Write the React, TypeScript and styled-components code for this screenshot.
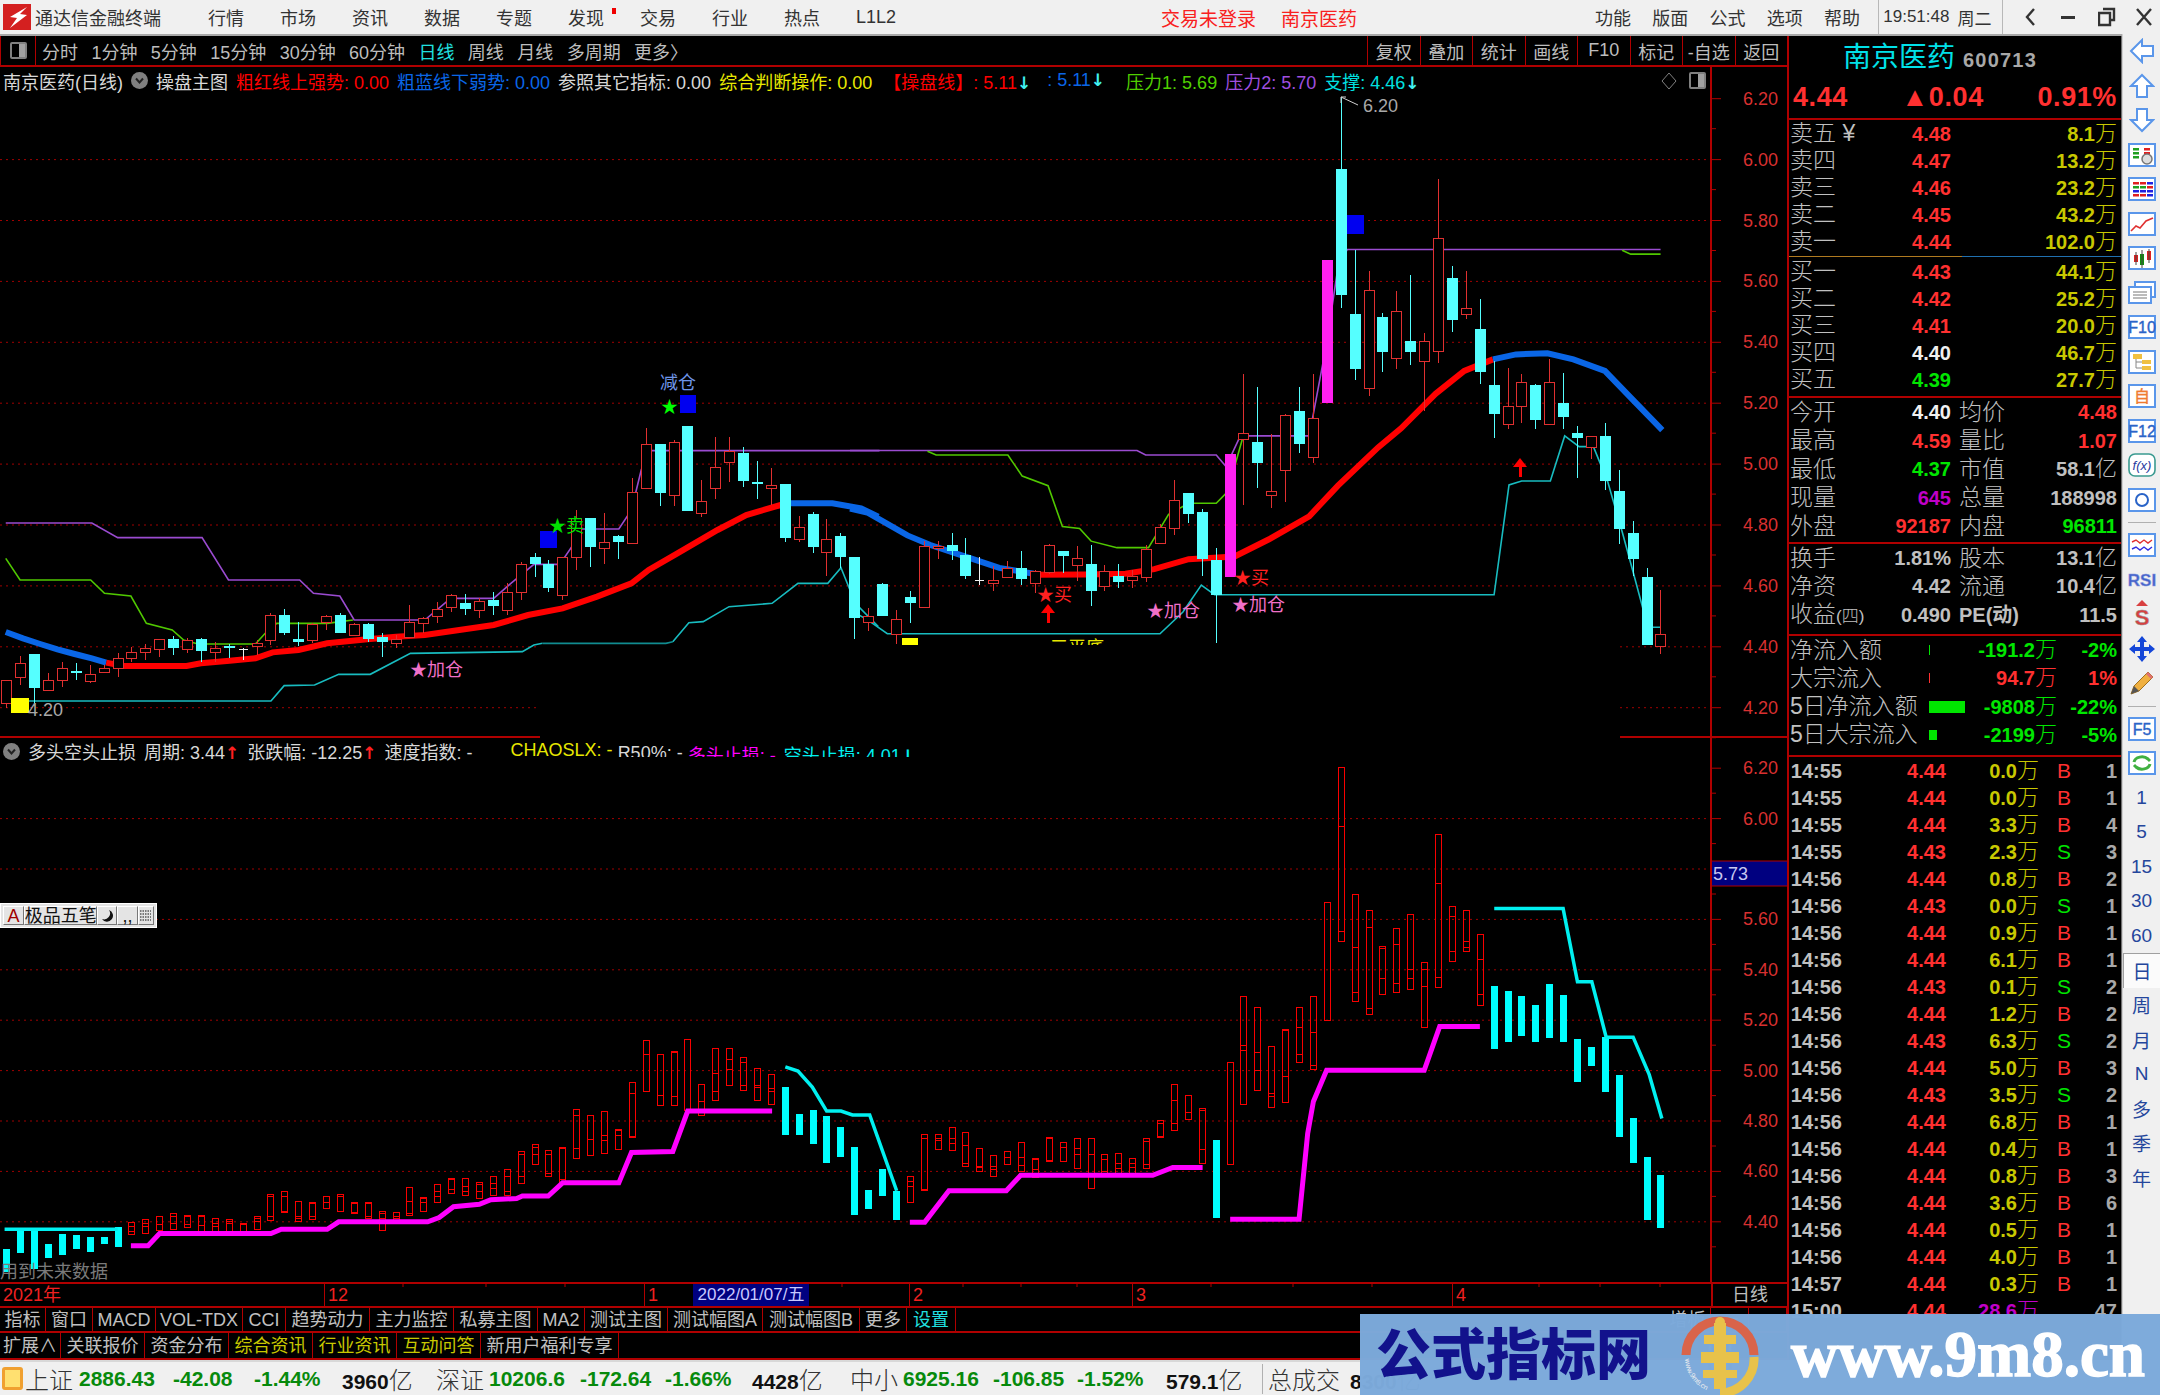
import React from "react";
import styled, { createGlobalStyle } from "styled-components";

const FONT = `"Liberation Sans", "Noto Sans CJK SC", "DejaVu Sans", sans-serif`;
const RED = "#ff3030";
const GREEN = "#00e600";
const GOLD = "#c8c800";
const GRAY = "#c0c0c0";
const LINE = "#b00000";

const GlobalStyle = createGlobalStyle`
  html, body { margin: 0; padding: 0; background: #000; overflow: hidden; }
  * { box-sizing: border-box; }
`;

/* ---------- chart data: rows are read off the plot, [high, bodyTop, bodyBottom, low, kind] ---------- */
type Row = [number, number, number, number, string];
const earlyRows: Row[] = [
  [1020, 1020, 1090, 1103, "r"], [947, 970, 1012, 1035, "r"], [943, 943, 1045, 1090, "c"], [1000, 1020, 1050, 1050, "r"],
  [965, 985, 1020, 1040, "r"], [970, 992, 1000, 1020, "c"], [975, 1003, 1022, 1030, "r"], [975, 985, 997, 1000, "r"],
  [940, 953, 985, 1010, "r"], [922, 935, 955, 965, "r"], [912, 925, 936, 960, "r"], [898, 898, 928, 950, "r"],
  [888, 898, 925, 945, "c"], [895, 900, 927, 940, "r"], [895, 898, 933, 965, "c"], [905, 925, 937, 965, "r"],
  [912, 918, 924, 955, "c"], [925, 927, 928, 960, "w"], [900, 908, 918, 945, "r"], [820, 826, 900, 915, "r"],
  [808, 826, 880, 885, "c"], [845, 898, 905, 918, "c"], [848, 853, 900, 910, "r"], [826, 828, 847, 870, "r"],
  [818, 826, 880, 880, "c"], [850, 853, 885, 888, "r"], [850, 853, 898, 905, "c"], [880, 890, 905, 950, "c"],
  [885, 898, 908, 925, "r"], [795, 845, 890, 895, "r"], [830, 835, 848, 880, "r"], [785, 808, 828, 850, "r"],
  [762, 765, 802, 815, "r"], [762, 790, 808, 825, "c"], [775, 783, 810, 835, "r"], [755, 780, 798, 825, "c"],
  [730, 755, 810, 825, "r"], [665, 673, 755, 780, "r"], [640, 650, 673, 710, "c"], [660, 673, 745, 755, "c"],
  [650, 652, 765, 780, "r"], [510, 535, 652, 690, "r"], [533, 535, 622, 680, "c"], [520, 607, 625, 672, "r"],
  [585, 587, 605, 658, "c"], [415, 455, 608, 612, "r"], [263, 313, 445, 447, "r"], [313, 313, 460, 497, "c"],
  [300, 305, 465, 497, "r"], [258, 258, 514, 514, "c"], [420, 482, 518, 532, "r"], [290, 382, 445, 478, "r"],
  [290, 332, 365, 425, "r"], [322, 340, 424, 442, "c"], [362, 425, 433, 478, "c"], [385, 435, 445, 495, "r"],
  [433, 433, 595, 605, "c"], [528, 562, 598, 605, "r"], [515, 523, 622, 640, "c"], [538, 597, 635, 708, "r"],
  [578, 587, 650, 685, "c"], [650, 650, 833, 897, "c"],
];
const lateRows: Row[] = [
  [1380, 1400, 1417, 1440, "r"], [1315, 1317, 1400, 1401, "c"], [1385, 1408, 1447, 1475, "r"], [1335, 1352, 1367, 1420, "c"],
  [1205, 1217, 1378, 1380, "r"], [1205, 1217, 1224, 1252, "r"], [1183, 1216, 1232, 1255, "c"], [1198, 1240, 1296, 1305, "c"],
  [1247, 1306, 1307, 1320, "w"], [1270, 1306, 1315, 1335, "r"], [1258, 1276, 1298, 1300, "r"], [1230, 1275, 1303, 1320, "c"],
  [1280, 1284, 1315, 1340, "r"], [1212, 1216, 1285, 1290, "r"], [1230, 1230, 1245, 1288, "c"], [1218, 1248, 1267, 1310, "r"],
  [1215, 1266, 1335, 1375, "c"], [1268, 1283, 1322, 1335, "r"], [1265, 1297, 1312, 1328, "c"], [1280, 1297, 1307, 1328, "r"],
  [1215, 1225, 1298, 1312, "r"], [1160, 1168, 1210, 1212, "r"], [1045, 1098, 1170, 1190, "r"], [1080, 1080, 1135, 1158, "c"],
  [1122, 1128, 1252, 1295, "c"], [1222, 1253, 1345, 1470, "c"], [977, 977, 1300, 1300, "m"], [768, 922, 938, 1110, "r"],
  [803, 945, 1002, 1065, "c"], [925, 1075, 1085, 1118, "r"], [872, 875, 1020, 1103, "r"], [803, 866, 950, 975, "c"],
  [768, 883, 985, 1000, "r"], [470, 470, 845, 845, "m"], [45, 232, 562, 595, "c"], [445, 612, 755, 785, "c"],
  [498, 550, 805, 825, "r"], [610, 618, 712, 762, "c"], [552, 604, 727, 755, "r"], [510, 682, 712, 745, "c"],
  [662, 683, 735, 865, "r"], [258, 412, 707, 740, "r"], [485, 517, 626, 658, "c"], [498, 596, 612, 625, "r"],
  [572, 650, 763, 795, "c"], [735, 796, 873, 935, "c"], [752, 851, 898, 912, "r"], [768, 790, 852, 895, "r"],
  [795, 796, 888, 912, "c"], [730, 790, 900, 902, "r"], [765, 843, 880, 912, "c"], [905, 922, 936, 1040, "c"],
  [930, 930, 960, 990, "r"], [897, 930, 1048, 1072, "c"], [1018, 1074, 1173, 1213, "c"], [1152, 1184, 1252, 1295, "c"],
  [1275, 1298, 1477, 1477, "c"], [1333, 1448, 1478, 1500, "r"],
];

const earlyPrice = (v: number) => 5.4076 - v / 913.5;
const latePrice = (v: number) => 6.2614 - v / 795.7;
const candles = [
  ...earlyRows.map((r) => ({ h: earlyPrice(r[0]), t: earlyPrice(r[1]), b: earlyPrice(r[2]), l: earlyPrice(r[3]), kind: r[4] })),
  ...lateRows.map((r) => ({ h: latePrice(r[0]), t: latePrice(r[1]), b: latePrice(r[2]), l: latePrice(r[3]), kind: r[4] })),
];
const candleX = (i: number) => Math.round(6.3 + 13.9 * i);
const upperY = (p: number) => 159.6 + (6 - p) * 304.5;
const lowerY = (p: number) => 818.6 + (6 - p) * 252;
const isStopRun = (i: number) => i <= 8 || (i >= 56 && i <= 64) || i === 87 || i >= 107;

type Pt = [number, number];
const leftUpper = (pts: Pt[]) => pts.map(([x, y]) => `${x / 1.742},${340 + y / 3}`).join(" ");
const rightUpper = (pts: Pt[]) => pts.map(([x, y]) => `${850 + x / 1.742},${80 + y / 2.613}`).join(" ");
const leftLower = (pts: Pt[]) => pts.map(([x, y]) => `${x / 1.742},${730 + y / 2.8}`).join(" ");
const rightLower = (pts: Pt[]) => pts.map(([x, y]) => `${880 + x / 1.742},${730 + y / 2.8}`).join(" ");

const TICK_PRICES = [6.2, 6.0, 5.8, 5.6, 5.4, 5.2, 5.0, 4.8, 4.6, 4.4];

const Plot = styled.svg`
  display: block;
  overflow: visible;
  font-family: ${FONT};
`;

const Mark = ({ x, y, star, label, color, size = 18 }: { x: number; y: number; star?: boolean; label: string; color: string; size?: number }) => (
  <text x={x} y={y} fill={color} fontSize={size}>
    {star ? <tspan fontSize={17}>★</tspan> : null}
    {label}
  </text>
);

const UpArrow = ({ x, y }: { x: number; y: number }) => (
  <g fill="#ff0000">
    <polygon points={`${x - 7},${y + 9} ${x},${y} ${x + 7},${y + 9}`} />
    <rect x={x - 1} y={y + 8} width={3} height={11} />
  </g>
);

const UpperChart = () => (
  <Plot width={1787} height={643} viewBox="0 94 1787 643">
    {[6.0, 5.8, 5.6, 5.4, 5.2, 5.0, 4.8, 4.6, 4.4, 4.2].map((p) => (
      <line key={p} x1={0} x2={1710} y1={upperY(p)} y2={upperY(p)} stroke="#a00000" strokeDasharray="2 4" />
    ))}
    {/* thin pressure and support steps */}
    <g fill="none" strokeWidth={1.6}>
      <polyline stroke="#9a4bd0" points={leftUpper([[10, 549], [160, 549], [205, 593], [352, 593], [398, 720], [522, 720], [546, 760], [592, 768], [617, 840], [740, 840], [785, 775], [860, 775], [890, 730], [930, 673], [975, 673], [1000, 610], [1010, 567], [1078, 567], [1100, 510], [1117, 390], [1130, 332], [1532, 332]])} />
      <polyline stroke="#9a4bd0" points={rightUpper([[0, 968], [500, 968], [515, 980], [638, 980], [655, 1010], [680, 930], [800, 930], [830, 690], [850, 490], [866, 443], [1412, 443]])} />
      <polyline stroke="#50c800" points={leftUpper([[10, 655], [35, 720], [158, 720], [182, 760], [228, 768], [255, 850], [300, 870], [320, 900], [345, 912], [445, 912], [462, 880], [482, 850], [570, 850], [615, 840]])} />
      <polyline stroke="#50c800" points={rightUpper([[135, 970], [150, 980], [275, 980], [300, 1035], [345, 1060], [370, 1167], [400, 1172], [420, 1205], [465, 1222], [520, 1222], [555, 1135], [590, 1106], [638, 1106], [655, 1080], [670, 1010], [685, 930]])} />
      <polyline stroke="#50c800" points={rightUpper([[1345, 445], [1360, 455], [1412, 455]])} />
      <polyline stroke="#18bcc0" points={leftUpper([[50, 1083], [472, 1083], [495, 1037], [548, 1035], [590, 1003], [645, 1003], [715, 940], [910, 935], [930, 915], [945, 910]])} />
      <polyline stroke="#108c90" points={leftUpper([[945, 910], [1160, 910], [1172, 905]])} />
      <polyline stroke="#18bcc0" points={leftUpper([[1172, 905], [1200, 848], [1225, 845], [1270, 800], [1345, 790], [1390, 730], [1442, 730], [1465, 683], [1490, 790], [1530, 860]])} />
      <polyline stroke="#18bcc0" points={rightUpper([[0, 1385], [30, 1410], [65, 1447], [540, 1447], [580, 1390], [612, 1320], [635, 1345], [1122, 1345], [1148, 1058], [1170, 1048], [1220, 1048], [1245, 930], [1270, 958], [1295, 958], [1320, 1050], [1345, 1180], [1365, 1290], [1390, 1430], [1412, 1430]])} />
    </g>
    {/* thick trend line */}
    <g fill="none" strokeWidth={6}>
      <polyline stroke="#0a66e6" points={leftUpper([[10, 876], [40, 895], [70, 912], [100, 928], [130, 942], [160, 955], [185, 968]])} />
      <polyline stroke="#ff0000" points={leftUpper([[185, 968], [215, 978], [325, 978], [350, 970], [400, 962], [445, 955], [475, 937], [520, 930], [570, 910], [640, 898], [690, 890], [740, 885], [800, 870], [860, 855], [920, 825], [980, 805], [1040, 770], [1100, 730], [1130, 690], [1180, 640], [1250, 570], [1300, 525], [1360, 495]])} />
      <polyline stroke="#0a66e6" points={leftUpper([[1360, 490], [1450, 490], [1500, 505], [1530, 530]])} />
      <polyline stroke="#0a66e6" points={rightUpper([[0, 1120], [30, 1130], [100, 1190], [140, 1215], [200, 1245], [260, 1275], [320, 1290]])} />
      <polyline stroke="#ff0000" points={rightUpper([[320, 1293], [410, 1292], [480, 1290], [530, 1278], [590, 1252], [670, 1245], [730, 1200], [800, 1140], [850, 1060], [920, 960], [960, 910], [1020, 820], [1070, 760], [1120, 730]])} />
      <polyline stroke="#0a66e6" points={rightUpper([[1120, 730], [1160, 717], [1215, 714], [1260, 730], [1315, 760], [1360, 830], [1415, 915]])} />
    </g>
    {/* candles */}
    <g shapeRendering="crispEdges">
      {candles.map((c, i) => {
        const x = candleX(i);
        const colour = c.kind === "c" ? "#55ffff" : c.kind === "w" ? "#f0f0f0" : c.kind === "m" ? "#ff20f0" : "#e03030";
        const top = Math.round(upperY(c.t));
        const bottom = Math.round(upperY(c.b));
        return (
          <g key={i}>
            <line x1={x + 0.5} x2={x + 0.5} y1={upperY(c.h)} y2={upperY(c.l)} stroke={colour} />
            {c.kind === "r" ? (
              <rect x={x - 4.5} y={top + 0.5} width={10} height={bottom - top} fill="#000" stroke={colour} />
            ) : c.kind === "w" ? (
              <line x1={x - 4} x2={x + 5} y1={top + 0.5} y2={top + 0.5} stroke={colour} />
            ) : (
              <rect x={x - 5} y={top} width={11} height={bottom - top} fill={colour} />
            )}
          </g>
        );
      })}
    </g>
    {/* cut by the hidden strip below */}
    <text x={1050} y={654} fill="#e8e800" fontSize={18}>三平底</text>
    <rect x={902} y={638} width={16} height={8} fill="#ffff00" />
    <rect x={540} y={645} width={1080} height={92} fill="#000" />
    {/* signals */}
    <rect x={680} y={395} width={16} height={18} fill="#0000f0" />
    <rect x={540} y={531} width={17} height={17} fill="#0000f0" />
    <rect x={1347} y={215} width={17} height={19} fill="#0000f0" />
    <rect x={11} y={698} width={18} height={15} fill="#ffff00" />
    <Mark x={660} y={389} label="减仓" color="#6f95e8" />
    <Mark x={661} y={413} star label="" color="#00ff00" />
    <Mark x={549} y={532} star label="卖" color="#00e000" />
    <Mark x={410} y={676} star label="加仓" color="#f070c8" />
    <Mark x={1147} y={617} star label="加仓" color="#f070c8" />
    <Mark x={1232} y={611} star label="加仓" color="#f070c8" />
    <Mark x={1234} y={584} star label="买" color="#ff2020" />
    <Mark x={1037} y={601} star label="买" color="#ff2020" />
    <UpArrow x={1048} y={604} />
    <UpArrow x={1520} y={458} />
    <text x={28} y={716} fill="#a8a8a8" fontSize={18}>4.20</text>
    <polyline points="1341,97 1358,105" stroke="#d0d0d0" fill="none" />
    <polyline points="1341,103 1341,97 1346,97" stroke="#d0d0d0" fill="none" />
    <text x={1363} y={112} fill="#a8a8a8" fontSize={18}>6.20</text>
    {/* axis */}
    <line x1={0} x2={540} y1={737} y2={737} stroke={LINE} strokeWidth={2} />
    <line x1={1620} x2={1787} y1={737} y2={737} stroke={LINE} strokeWidth={2} />
    <line x1={1711} x2={1711} y1={66} y2={737} stroke={LINE} strokeWidth={2} />
    {[...TICK_PRICES, 4.2].map((p) => (
      <g key={p}>
        <line x1={1711} x2={1721} y1={upperY(p)} y2={upperY(p)} stroke={LINE} />
        <line x1={1711} x2={1716} y1={upperY(p) + 30} y2={upperY(p) + 30} stroke={LINE} />
        <text x={1743} y={upperY(p) + 6} fill="#d83030" fontSize={18}>{p.toFixed(2)}</text>
      </g>
    ))}
  </Plot>
);

const LowerChart = () => (
  <Plot width={1787} height={517} viewBox="0 765 1787 517">
    {[6.0, 5.8, 5.6, 5.4, 5.2, 5.0, 4.8, 4.6, 4.4].map((p) => (
      <line key={p} x1={0} x2={1710} y1={lowerY(p)} y2={lowerY(p)} stroke="#a00000" strokeDasharray="2 4" />
    ))}
    <g shapeRendering="crispEdges">
      {candles.map((c, i) => {
        const x = candleX(i);
        const top = Math.round(lowerY(c.h));
        const bottom = Math.min(Math.round(lowerY(c.l)), 1281);
        if (isStopRun(i)) {
          return <rect key={i} x={x - 3} y={top} width={7} height={bottom - top} fill="#00ffff" />;
        }
        return (
          <g key={i} stroke="#f80000" fill="none">
            <rect x={x - 2.5} y={top + 0.5} width={6} height={bottom - top} />
            <line x1={x - 2} x2={x + 3} y1={Math.round(lowerY(c.t)) + 0.5} y2={Math.round(lowerY(c.t)) + 0.5} />
            <line x1={x - 2} x2={x + 3} y1={Math.round(lowerY(c.b)) + 0.5} y2={Math.round(lowerY(c.b)) + 0.5} />
          </g>
        );
      })}
    </g>
    <g fill="none" stroke="#ff00ff" strokeWidth={5}>
      <polyline points={leftLower([[228, 1444], [258, 1444], [278, 1410], [472, 1410], [490, 1398], [570, 1398], [590, 1377], [745, 1377], [765, 1365], [790, 1335], [835, 1328], [855, 1315], [900, 1312], [910, 1305], [955, 1305], [980, 1268], [1078, 1268], [1100, 1183], [1172, 1180], [1198, 1067], [1345, 1067]])} />
      <polyline points={rightLower([[52, 1378], [78, 1378], [120, 1290], [220, 1290], [245, 1247], [475, 1247], [510, 1225], [562, 1225]])} />
      <polyline points={rightLower([[610, 1370], [730, 1370], [745, 1130], [755, 1040], [778, 953], [948, 953], [975, 830], [1045, 830]])} />
    </g>
    <g fill="none" stroke="#00f0f0" strokeWidth={3.5}>
      <polyline points={leftLower([[8, 1398], [205, 1398]])} />
      <polyline points={leftLower([[1368, 943], [1390, 955], [1415, 1000], [1440, 1067], [1465, 1067], [1485, 1078], [1515, 1078], [1562, 1290]])} />
      <polyline points={rightLower([[1070, 500], [1190, 500], [1215, 705], [1240, 705], [1265, 860], [1312, 860], [1340, 965], [1362, 1088]])} />
    </g>
    <text x={0} y={1278} fill="#7a7a7a" fontSize={18}>用到未来数据</text>
    <line x1={1711} x2={1711} y1={737} y2={1282} stroke={LINE} strokeWidth={2} />
    {TICK_PRICES.map((p) => (
      <g key={p}>
        <line x1={1711} x2={1721} y1={lowerY(p)} y2={lowerY(p)} stroke={LINE} />
        <line x1={1711} x2={1716} y1={lowerY(p) + 25} y2={lowerY(p) + 25} stroke={LINE} />
        <text x={1743} y={lowerY(p) + 6} fill="#d83030" fontSize={18}>{p.toFixed(2)}</text>
      </g>
    ))}
    <rect x={1712} y={861} width={75} height={25} fill="#000080" />
    <line x1={1712} x2={1787} y1={861} y2={861} stroke={LINE} />
    <line x1={1712} x2={1787} y1={886} y2={886} stroke={LINE} />
    <text x={1713} y={880} fill="#c8c8f0" fontSize={18}>5.73</text>
    {[403, 486, 565, 842, 963, 1021, 1077, 1211, 1293, 1372, 1539, 1600, 1660].map((x) => (
      <line key={x} x1={x} x2={x} y1={1282} y2={1287} stroke={LINE} />
    ))}
  </Plot>
);

/* ---------- window frame ---------- */
const Window = styled.div`
  position: relative;
  width: 2160px;
  height: 1395px;
  overflow: hidden;
  background: #000;
  font-family: ${FONT};
`;

const TitleBar = styled.div`
  display: flex;
  align-items: center;
  height: 36px;
  background: #f0f0f0;
  border-bottom: 2px solid #a8a8a8;
  color: #333;
  font-size: 18px;
`;

const AppName = styled.span`
  flex: none;
  width: 126px;
  margin: 0 47px 0 2px;
  white-space: nowrap;
`;

const MenuItem = styled.span<{ $width?: number }>`
  flex: none;
  width: ${(p) => p.$width ?? 72}px;
  position: relative;
  white-space: nowrap;
`;

const NewDot = styled.i`
  position: absolute;
  left: 44px;
  top: 4px;
  width: 4px;
  height: 6px;
  background: #f00000;
`;

const AlertText = styled.span<{ $width: number }>`
  flex: none;
  width: ${(p) => p.$width}px;
  color: #f82020;
  font-size: 19px;
  white-space: nowrap;
`;

const ClockBox = styled.div`
  flex: none;
  display: flex;
  align-items: center;
  gap: 8px;
  width: 125px;
  height: 34px;
  margin-left: -3px;
  padding-left: 4px;
  border-left: 1px solid #b8b8b8;
  border-right: 1px solid #b8b8b8;
  white-space: nowrap;
  font-size: 17px;
`;

const WinButton = styled.svg<{ $gap: number }>`
  display: block;
  margin-left: ${(p) => p.$gap}px;
  flex: none;
`;

const Body = styled.div`
  display: flex;
  height: 1324px;
`;

const LeftColumn = styled.div`
  display: flex;
  flex-direction: column;
  width: 1787px;
`;

const ToolRow = styled.div`
  display: flex;
  align-items: center;
  height: 31px;
  border-bottom: 2px solid ${LINE};
  color: #bdbdbd;
  font-size: 18px;
`;

const ToolSquare = styled.div`
  display: flex;
  align-items: center;
  justify-content: center;
  width: 36px;
  height: 29px;
  margin-right: 6px;
  border-right: 1px solid ${LINE};
  border-left: 1px solid ${LINE};
`;

const MiniWindow = styled.i`
  display: block;
  width: 17px;
  height: 17px;
  border: 2px solid #808080;
  border-radius: 2px;
  background: linear-gradient(90deg, #000 55%, #a0a0a0 55%);
`;

const PeriodTab = styled.span<{ $active?: boolean }>`
  margin-right: 13.4px;
  color: ${(p) => (p.$active ? "#20e0e0" : "#bdbdbd")};
  white-space: nowrap;
`;

const ToolButtons = styled.div`
  display: flex;
  margin-left: auto;
  height: 29px;
`;

const ToolButton = styled.span`
  display: flex;
  align-items: center;
  justify-content: center;
  width: 52.5px;
  border-left: 1px solid ${LINE};
  white-space: nowrap;
`;

const Legend = styled.div<{ $height: number }>`
  display: flex;
  align-items: center;
  gap: 8px;
  width: 1711px;
  height: ${(p) => p.$height}px;
  padding-left: 3px;
  overflow: hidden;
  font-size: 18px;
  color: #d8d8d8;
  white-space: nowrap;
`;

const LegendItem = styled.span<{ $color?: string; $drop?: number; $gap?: number }>`
  color: ${(p) => p.$color ?? "#d8d8d8"};
  padding-top: ${(p) => p.$drop ?? 0}px;
  margin-left: ${(p) => p.$gap ?? 0}px;
`;

/* the outputs past 速度指数 are cut by the pane below them */
const CutStrip = styled.div`
  display: flex;
  align-items: flex-start;
  align-self: flex-start;
  gap: 8px;
  height: 20px;
  overflow: hidden;
  line-height: 20px;
`;

const ArrowMark = styled.span<{ $color: string }>`
  color: ${(p) => p.$color};
  font-family: "DejaVu Sans", sans-serif;
  font-size: 17px;
  font-weight: 700;
`;

const Badge = styled.i`
  flex: none;
  display: flex;
  align-items: center;
  justify-content: center;
  width: 17px;
  height: 17px;
  border-radius: 50%;
  background: #808080;
`;

const LegendTools = styled.div`
  display: flex;
  align-items: center;
  gap: 11px;
  margin-left: auto;
  padding-right: 5px;
`;

const LowerPane = styled.div`
  position: relative;
`;

const InputBar = styled.div`
  position: absolute;
  left: 0;
  top: 166px;
  display: flex;
  align-items: stretch;
  height: 25px;
  width: 157px;
  padding: 2px;
  background: #e4e4e4;
  border: 1px solid #fff;
  color: #111;
  font-size: 18px;
  line-height: 20px;
  z-index: 2;
`;

const InputCell = styled.span<{ $width: number; $color?: string }>`
  display: flex;
  align-items: center;
  justify-content: center;
  width: ${(p) => p.$width}px;
  border: 1px solid #777;
  border-top-color: #fff;
  border-left-color: #fff;
  color: ${(p) => p.$color ?? "#111"};
  white-space: nowrap;
`;

const TimeRow = styled.div`
  display: flex;
  align-items: stretch;
  height: 24px;
  border-top: 2px solid ${LINE};
  font-size: 18px;
  line-height: 22px;
`;

const TimeCell = styled.span<{ $width: number; $mark?: boolean }>`
  width: ${(p) => p.$width}px;
  padding-left: 3px;
  color: #f02020;
  border-left: ${(p) => (p.$mark ? `1px solid ${LINE}` : "0")};
  white-space: nowrap;
`;

const DateCell = styled.span`
  width: 116px;
  background: #000080;
  color: #c8c8ff;
  text-align: center;
  font-size: 17px;
  white-space: nowrap;
`;

const PeriodBox = styled.span`
  width: 76px;
  margin-left: auto;
  text-align: center;
  color: #bdbdbd;
  border-left: 2px solid ${LINE};
`;

const TabRow = styled.div<{ $height: number; $bottom?: boolean }>`
  display: flex;
  align-items: stretch;
  height: ${(p) => p.$height}px;
  border-top: 2px solid ${LINE};
  border-bottom: ${(p) => (p.$bottom ? `2px solid ${LINE}` : "0")};
  font-size: 18px;
  line-height: ${(p) => (p.$bottom ? 26 : 24)}px;
`;

const Tab = styled.span<{ $width: number; $color?: string }>`
  width: ${(p) => p.$width}px;
  text-align: center;
  color: ${(p) => p.$color ?? "#c0c0c0"};
  border-right: 1px solid ${LINE};
  white-space: nowrap;
`;

const TabFill = styled.span`
  flex: 1;
`;

/* ---------- quote panel ---------- */
const QuotePanel = styled.div`
  width: 335px;
  height: 1324px;
  overflow: hidden;
  border-left: 2px solid ${LINE};
  border-right: 1px solid #707070;
  padding: 0 4px 0 1px;
  background: #000;
`;

const QuoteHead = styled.div`
  height: 84px;
  margin: 0 -4px 0 -1px;
  padding: 0 4px 0 4px;
  border-bottom: 2px solid ${LINE};
`;

const NameRow = styled.div`
  display: flex;
  align-items: baseline;
  height: 44px;
  padding: 3px 0 0 50px;
  gap: 8px;
  white-space: nowrap;
`;

const StockName = styled.span`
  color: #00e0e8;
  font-size: 28px;
  line-height: 38px;
`;

const StockCode = styled.span`
  color: #a8a8a8;
  font-size: 20px;
  font-weight: 700;
  letter-spacing: 1.2px;
`;

const PriceRow = styled.div`
  display: flex;
  justify-content: space-between;
  color: #ff3030;
  font-size: 27px;
  font-weight: 700;
  line-height: 34px;
  letter-spacing: 0.6px;
  white-space: nowrap;
`;

const BookRow = styled.div`
  display: grid;
  grid-template-columns: 118px 43px 1fr;
  align-items: center;
  height: 27px;
  white-space: nowrap;
`;

const Label = styled.span<{ $indent?: number }>`
  color: ${GRAY};
  font-size: 23px;
  font-weight: 300;
  line-height: 27px;
  margin-left: ${(p) => p.$indent ?? 0}px;
  white-space: nowrap;
`;

const Num = styled.span<{ $color: string }>`
  color: ${(p) => p.$color};
  font-size: 20px;
  font-weight: 700;
  line-height: 24px;
  text-align: right;
  white-space: nowrap;
`;

const Unit = styled.span`
  font-size: 22px;
  font-weight: 300;
  line-height: 0;
`;

const BookDivider = styled.div`
  height: 3px;
  margin: 0 -4px 0 -1px;
  padding: 1px 0;
  background-clip: content-box;
  background-image: linear-gradient(90deg, #b07a20 52%, #2070b0 52%);
`;

const RedDivider = styled.div<{ $above?: number }>`
  height: 2px;
  margin: ${(p) => p.$above ?? 0}px -4px 0 -1px;
  background: ${LINE};
`;

const StatRow = styled.div<{ $height: number }>`
  display: grid;
  grid-template-columns: 48px 113px 56px 1fr;
  align-items: center;
  height: ${(p) => p.$height}px;
  white-space: nowrap;
`;

const SmallBracket = styled.span`
  font-size: 17px;
`;

const BoldTag = styled.span`
  margin-left: 8px;
  color: ${GRAY};
  font-size: 20px;
  font-weight: 700;
  line-height: 24px;
  white-space: nowrap;
`;

const FlowRow = styled.div`
  display: grid;
  grid-template-columns: 139px 37px 91px 1fr;
  align-items: center;
  height: 28.3px;
  white-space: nowrap;
`;

const FlowBar = styled.i<{ $width: number; $height: number; $color: string }>`
  display: block;
  width: ${(p) => p.$width}px;
  height: ${(p) => p.$height}px;
  background: ${(p) => p.$color};
`;

const TradeRow = styled.div`
  display: grid;
  grid-template-columns: 52px 104px 93px 31px 1fr;
  align-items: center;
  height: 27px;
  white-space: nowrap;
`;

const Side = styled.span<{ $color: string }>`
  color: ${(p) => p.$color};
  font-size: 21px;
  line-height: 24px;
  margin-left: 18px;
`;

/* ---------- side toolbar ---------- */
const Sidebar = styled.div`
  display: flex;
  flex-direction: column;
  align-items: center;
  width: 38px;
  height: 1326px;
  margin-top: -2px;
  background: #f0f0f0;
  border-left: 1px solid #d0d0d0;
  font-family: ${FONT};
`;

const SideItem = styled.div<{ $selected?: boolean }>`
  display: flex;
  align-items: center;
  justify-content: center;
  flex: none;
  width: 100%;
  height: 34.5px;
  color: #24469c;
  font-size: 19px;
  background: ${(p) => (p.$selected ? "#fbfbfb" : "transparent")};
  border-top: ${(p) => (p.$selected ? "1px solid #a0a0a0" : "0")};
  border-left: ${(p) => (p.$selected ? "1px solid #a0a0a0" : "0")};
`;

const SideRule = styled.hr`
  flex: none;
  width: 28px;
  height: 1px;
  margin: 5px 0;
  border: 0;
  background: #b0b0b0;
`;

/* ---------- status bar ---------- */
const StatusBar = styled.div`
  display: flex;
  align-items: center;
  height: 35px;
  background: #f0f0f0;
  border-top: 2px solid #d8d8d8;
  white-space: nowrap;
`;

const StatusIcon = styled.i`
  flex: none;
  width: 21px;
  height: 23px;
  margin: 0 2px;
  border: 3px solid #f0a030;
  border-radius: 3px;
  background: #ffe070;
`;

const StatusName = styled.span<{ $width: number }>`
  width: ${(p) => p.$width}px;
  color: #333;
  font-size: 24px;
  font-weight: 300;
`;

const StatusValue = styled.span<{ $width: number; $dark?: boolean }>`
  width: ${(p) => p.$width}px;
  color: ${(p) => (p.$dark ? "#111" : "#078a0c")};
  font-size: 21px;
  font-weight: 700;
`;

const StatusUnit = styled.span`
  font-size: 24px;
  font-weight: 300;
  color: #333;
`;

const StatusSplit = styled.i`
  flex: none;
  width: 1px;
  height: 30px;
  margin-right: 5px;
  background: #b0b0b0;
`;

/* ---------- site banner laid over the corner ---------- */
const Banner = styled.div`
  position: absolute;
  right: 0;
  bottom: 0;
  display: flex;
  align-items: center;
  width: 800px;
  height: 81px;
  padding-left: 16px;
  background: rgba(124, 170, 218, 0.985);
  white-space: nowrap;
`;

const BannerTitle = styled.span`
  width: 304px;
  color: #12128c;
  font-size: 55px;
  font-weight: 900;
  line-height: 60px;
`;

const BannerUrl = styled.span`
  margin-left: 31px;
  color: #fff;
  font-family: "Liberation Serif", serif;
  font-size: 65px;
  font-weight: 700;
  -webkit-text-stroke: 1.5px #fff;
`;

/* ---------- drawings ---------- */
const iconBlue = "#5a96ea";

const Frame = ({ children }: { children?: React.ReactNode }) => (
  <svg width={30} height={26} viewBox="0 0 30 26">
    <rect x={2} y={2} width={26} height={22} fill="#fff" stroke={iconBlue} strokeWidth={2} />
    {children}
  </svg>
);

const Arrow = ({ rotate }: { rotate: number }) => (
  <svg width={26} height={26} viewBox="0 0 26 26">
    <polygon
      transform={`rotate(${rotate} 13 13)`}
      points="13,2 24,13 18,13 18,24 8,24 8,13 2,13"
      fill="#fff"
      stroke={iconBlue}
      strokeWidth={2}
    />
  </svg>
);

const colourRows = (colours: string[], x: number) =>
  colours.map((c, i) => <rect key={i} x={x} y={6 + i * 4} width={6} height={2.5} fill={c} />);

const IconLabel = ({ text, color = "#2a64c8" }: { text: string; color?: string }) => (
  <text x={15} y={19} textAnchor="middle" fontFamily={FONT} fontSize={16} fill={color} stroke={color} strokeWidth={0.4}>
    {text}
  </text>
);

const SIDE_TOP: React.ReactNode[] = [
  <Arrow key="l" rotate={-90} />,
  <Arrow key="u" rotate={0} />,
  <Arrow key="d" rotate={180} />,
  <Frame key="book">
    {colourRows(["#20a020", "#20a020", "#20a020"], 6)}
    {colourRows(["#e02020", "#e02020"], 17)}
    <circle cx={20} cy={17} r={5} fill="#ddd" stroke="#777" strokeWidth={1.5} />
  </Frame>,
  <Frame key="grid">
    {colourRows(["#e02020", "#20a020", "#2020e0", "#e02020"], 6)}
    {colourRows(["#e02020", "#20a020", "#2020e0", "#e02020"], 13)}
    {colourRows(["#2020e0", "#e02020", "#2020e0", "#2020e0"], 20)}
  </Frame>,
  <Frame key="line">
    <polyline points="4,20 9,15 13,17 19,10 26,7" fill="none" stroke="#e03030" strokeWidth={1.6} />
  </Frame>,
  <Frame key="kline">
    <rect x={7} y={10} width={4} height={7} fill="#e02020" />
    <rect x={13} y={9} width={4} height={11} fill="#109010" />
    <rect x={20} y={6} width={4} height={9} fill="#e02020" />
    <path d="M9 7V20M15 5V23M22 4V18" stroke="#444" />
  </Frame>,
  <svg key="win" width={30} height={26} viewBox="0 0 30 26">
    <rect x={8} y={2} width={20} height={15} fill="#fff" stroke={iconBlue} strokeWidth={2} />
    <rect x={2} y={7} width={22} height={16} fill="#fff" stroke={iconBlue} strokeWidth={2} />
    <path d="M6 12H20M6 15H20M6 18H20" stroke="#777" />
  </svg>,
  <Frame key="f10"><IconLabel text="F10" /></Frame>,
  <Frame key="tree">
    <rect x={6} y={5} width={9} height={5} fill="#f0c040" />
    <rect x={15} y={11} width={9} height={4} fill="#f0c040" />
    <rect x={15} y={17} width={9} height={4} fill="#f0c040" />
    <path d="M9 10V19H15M9 13H15" stroke="#888" fill="none" />
  </Frame>,
  <Frame key="own"><IconLabel text="自" color="#f07a30" /></Frame>,
  <Frame key="f12"><IconLabel text="F12" /></Frame>,
  <svg key="fx" width={30} height={26} viewBox="0 0 30 26">
    <rect x={2} y={2} width={26} height={22} rx={6} fill="#fff" stroke="#3a9a90" strokeWidth={1.6} />
    <text x={15} y={18} textAnchor="middle" fontFamily={FONT} fontSize={13} fontStyle="italic" fill="#2a3ca0">f(x)</text>
  </svg>,
  <Frame key="cycle">
    <circle cx={15} cy={13} r={6} fill="none" stroke="#2a64c8" strokeWidth={2} />
  </Frame>,
];

const SIDE_TOOLS: React.ReactNode[] = [
  <Frame key="wave">
    <polyline points="5,10 9,8 13,11 17,8 21,11 25,8" fill="none" stroke="#e03030" strokeWidth={1.4} />
    <polyline points="5,17 9,15 13,18 17,15 21,18 25,15" fill="none" stroke="#3030e0" strokeWidth={1.4} />
  </Frame>,
  <svg key="rsi" width={32} height={24} viewBox="0 0 32 24">
    <text x={16} y={18} textAnchor="middle" fontFamily={FONT} fontSize={17} fontWeight={700} fill="#4464c8" stroke="#8c9ae0" strokeWidth={0.5}>RSI</text>
  </svg>,
  <svg key="s" width={26} height={30} viewBox="0 0 26 30">
    <polygon points="13,1 19,7 7,7" fill="#d84040" />
    <text x={13} y={26} textAnchor="middle" fontFamily={FONT} fontSize={22} fontWeight={700} fill="#d84040" stroke="#999" strokeWidth={0.5}>S</text>
  </svg>,
  <svg key="move" width={28} height={28} viewBox="0 0 28 28">
    <path d="M14 1l5 6h-3v5h5V9l6 5-6 5v-3h-5v5h3l-5 6-5-6h3v-5H7v3l-6-5 6-5v3h5V7H9z" fill="#1446d8" />
  </svg>,
  <svg key="pencil" width={28} height={28} viewBox="0 0 28 28">
    <polygon points="3,25 6,17 20,3 25,8 11,22" fill="#f0b040" stroke="#a07020" />
    <polygon points="20,3 25,8 23,10 18,5" fill="#e07070" />
    <polygon points="3,25 6,17 11,22" fill="#555" />
  </svg>,
];

const SIDE_AFTER: React.ReactNode[] = [
  <Frame key="f5"><IconLabel text="F5" /></Frame>,
  <Frame key="refresh">
    <path d="M7 12a8 6 0 0 1 14-3l2 2M23 14a8 6 0 0 1-14 3l-2-2" fill="none" stroke="#40b040" strokeWidth={3} />
  </Frame>,
];

const ChevronDown = () => (
  <svg width={11} height={11} viewBox="0 0 11 11">
    <path d="M2 3.5l3.5 4 3.5-4" fill="none" stroke="#222" strokeWidth={2} />
  </svg>
);

const BannerLogo = () => (
  <svg width={80} height={80} viewBox="0 0 80 80">
    <path d="M6 40A34 34 0 0 1 74 40" fill="none" stroke="#d9644a" strokeWidth={9} />
    <path id="logoRing" d="M74 42A34 34 0 0 1 40 78" fill="none" stroke="#e8c24a" strokeWidth={9} />
    <path id="logoText" d="M5 44A36 36 0 0 0 38 78" fill="none" />
    <text fontFamily={FONT} fontSize={7} fill="#f0f0f0">
      <textPath href="#logoText">www.9m8.cn</textPath>
    </text>
    <g fill="#e8c24a">
      <circle cx={40} cy={7} r={5} />
      <rect x={34} y={8} width={12} height={66} />
      <rect x={24} y={20} width={32} height={9} />
      <rect x={21} y={37} width={38} height={11} />
      <rect x={23} y={55} width={34} height={8} />
    </g>
    <path d="M30 30V36M50 30V36M30 49V54M50 49V54" stroke="#7caada" strokeWidth={3} />
  </svg>
);

/* ---------- content ---------- */
const MENUS = ["行情", "市场", "资讯", "数据", "专题", "发现", "交易", "行业", "热点", "L1L2"];
const RIGHT_MENUS = ["功能", "版面", "公式", "选项", "帮助"];
const PERIODS = ["分时", "1分钟", "5分钟", "15分钟", "30分钟", "60分钟", "日线", "周线", "月线", "多周期", "更多〉"];
const TOOL_BUTTONS = ["复权", "叠加", "统计", "画线", "F10", "标记", "-自选", "返回"];
const SIDE_TEXT = ["1", "5", "15", "30", "60", "日", "周", "月", "N", "多", "季", "年"];

const ASKS = [
  ["卖五", "4.48", "8.1"],
  ["卖四", "4.47", "13.2"],
  ["卖三", "4.46", "23.2"],
  ["卖二", "4.45", "43.2"],
  ["卖一", "4.44", "102.0"],
];
const BIDS = [
  ["买一", "4.43", "44.1", RED],
  ["买二", "4.42", "25.2", RED],
  ["买三", "4.41", "20.0", RED],
  ["买四", "4.40", "46.7", "#f0f0f0"],
  ["买五", "4.39", "27.7", GREEN],
];
const STATS: [string, string, string, string, string, string][] = [
  ["今开", "4.40", "#f0f0f0", "均价", "4.48", RED],
  ["最高", "4.59", RED, "量比", "1.07", RED],
  ["最低", "4.37", GREEN, "市值", "58.1亿", GRAY],
  ["现量", "645", "#c000c8", "总量", "188998", GRAY],
  ["外盘", "92187", RED, "内盘", "96811", GREEN],
];
const FLOWS = [
  { name: "净流入额", w: 1, h: 10, value: "-191.2", pct: "-2%", color: GREEN },
  { name: "大宗流入", w: 1, h: 10, value: "94.7", pct: "1%", color: RED },
  { name: "5日净流入额", w: 36, h: 12, value: "-9808", pct: "-22%", color: GREEN },
  { name: "5日大宗流入", w: 8, h: 10, value: "-2199", pct: "-5%", color: GREEN },
];
const TRADES: [string, string, string, string, string][] = [
  ["14:55", "4.44", "0.0", "B", "1"], ["14:55", "4.44", "0.0", "B", "1"], ["14:55", "4.44", "3.3", "B", "4"],
  ["14:55", "4.43", "2.3", "S", "3"], ["14:56", "4.44", "0.8", "B", "2"], ["14:56", "4.43", "0.0", "S", "1"],
  ["14:56", "4.44", "0.9", "B", "1"], ["14:56", "4.44", "6.1", "B", "1"], ["14:56", "4.43", "0.1", "S", "2"],
  ["14:56", "4.44", "1.2", "B", "2"], ["14:56", "4.43", "6.3", "S", "2"], ["14:56", "4.44", "5.0", "B", "3"],
  ["14:56", "4.43", "3.5", "S", "2"], ["14:56", "4.44", "6.8", "B", "1"], ["14:56", "4.44", "0.4", "B", "1"],
  ["14:56", "4.44", "0.8", "B", "3"], ["14:56", "4.44", "3.6", "B", "6"], ["14:56", "4.44", "0.5", "B", "1"],
  ["14:56", "4.44", "4.0", "B", "1"], ["14:57", "4.44", "0.3", "B", "1"], ["15:00", "4.44", "28.6", "", "47"],
];
const TABS_ONE: [string, number, string?][] = [
  ["指标", 46], ["窗口", 47], ["MACD", 63], ["VOL-TDX", 87], ["CCI", 43], ["趋势动力", 84], ["主力监控", 84],
  ["私募主图", 84], ["MA2", 47], ["测试主图", 83], ["测试幅图A", 95], ["测试幅图B", 97], ["更多", 47], ["设置", 49, "#20e0e0"],
];
const TABS_TWO: [string, number, string?][] = [
  ["扩展∧", 61], ["关联报价", 84], ["资金分布", 84], ["综合资讯", 84, GOLD], ["行业资讯", 84, GOLD], ["互动问答", 84, GOLD], ["新用户福利专享", 138],
];

const Wan = () => <Unit>万</Unit>;

export default function App() {
  return (
    <Window>
      <GlobalStyle />
      <TitleBar>
        <svg width={30} height={26} viewBox="0 0 30 26" style={{ marginLeft: 3, flex: "none" }}>
          <rect width={28} height={26} fill="#d42020" />
          <path d="M24 3L7 13l7 1-7 10 17-13-7-1z" fill="#fff" />
        </svg>
        <AppName>通达信金融终端</AppName>
        {MENUS.map((m) => (
          <MenuItem key={m}>
            {m}
            {m === "发现" && <NewDot />}
          </MenuItem>
        ))}
        <MenuItem $width={233} />
        <AlertText $width={120}>交易未登录</AlertText>
        <AlertText $width={314}>南京医药</AlertText>
        {RIGHT_MENUS.map((m) => (
          <MenuItem key={m} $width={57.25}>{m}</MenuItem>
        ))}
        <ClockBox>
          <span>19:51:48</span>
          <span>周二</span>
        </ClockBox>
        <WinButton $gap={21} width={12} height={22} viewBox="0 0 12 22">
          <path d="M10 3L3 11l7 8" fill="none" stroke="#333" strokeWidth={2.4} />
        </WinButton>
        <WinButton $gap={25} width={14} height={22} viewBox="0 0 14 22">
          <rect y={10} width={14} height={3} fill="#333" />
        </WinButton>
        <WinButton $gap={23} width={18} height={22} viewBox="0 0 18 22">
          <path d="M5 3h11v11h-3M1 7h11v12H1z" fill="none" stroke="#333" strokeWidth={2.4} />
        </WinButton>
        <WinButton $gap={20} width={16} height={22} viewBox="0 0 16 22">
          <path d="M1 3l14 16M15 3L1 19" fill="none" stroke="#333" strokeWidth={2.4} />
        </WinButton>
      </TitleBar>

      <Body>
        <LeftColumn>
          <ToolRow>
            <ToolSquare><MiniWindow /></ToolSquare>
            {PERIODS.map((p) => (
              <PeriodTab key={p} $active={p === "日线"}>{p}</PeriodTab>
            ))}
            <ToolButtons>
              {TOOL_BUTTONS.map((b) => (
                <ToolButton key={b}>{b}</ToolButton>
              ))}
            </ToolButtons>
          </ToolRow>

          <Legend $height={27}>
            <LegendItem>南京医药(日线)</LegendItem>
            <Badge><ChevronDown /></Badge>
            <LegendItem $gap={0}>操盘主图</LegendItem>
            <LegendItem $color="#ff0000">粗红线上强势: 0.00</LegendItem>
            <LegendItem $color="#0a66e6">粗蓝线下弱势: 0.00</LegendItem>
            <LegendItem>参照其它指标: 0.00</LegendItem>
            <LegendItem $color="#e8e800">综合判断操作: 0.00</LegendItem>
            <LegendItem $color="#ff0000" $gap={3}>【操盘线】: 5.11<ArrowMark $color="#40f0f0">↓</ArrowMark></LegendItem>
            <LegendItem $color="#0a66e6" $gap={8}>: 5.11<ArrowMark $color="#40f0f0">↓</ArrowMark></LegendItem>
            <LegendItem $color="#50d000" $gap={13}>压力1: 5.69</LegendItem>
            <LegendItem $color="#a050e0">压力2: 5.70</LegendItem>
            <LegendItem $color="#00e0e0">支撑: 4.46<ArrowMark $color="#40f0f0">↓</ArrowMark></LegendItem>
            <LegendTools>
              <svg width={18} height={18} viewBox="0 0 18 18">
                <path d="M9 1l7 8-7 8-7-8z" fill="none" stroke="#808080" />
              </svg>
              <MiniWindow />
            </LegendTools>
          </Legend>
          <UpperChart />

          <LowerPane>
            <Legend $height={28}>
              <Badge><ChevronDown /></Badge>
              <LegendItem>多头空头止损</LegendItem>
              <LegendItem>周期: 3.44<ArrowMark $color="#ff2020">↑</ArrowMark></LegendItem>
              <LegendItem>张跌幅: -12.25<ArrowMark $color="#ff2020">↑</ArrowMark></LegendItem>
              <LegendItem>速度指数: -</LegendItem>
              <CutStrip>
                <LegendItem $color="#e8e800" $gap={30} $drop={3}>CHAOSLX: -</LegendItem>
                <LegendItem $gap={-3} $drop={6}>R50%: -</LegendItem>
                <LegendItem $color="#ff00ff" $gap={-3} $drop={9}>多头止损: -</LegendItem>
                <LegendItem $color="#00f0f0" $drop={9}>空头止损: 4.01<ArrowMark $color="#00f0f0">↓</ArrowMark></LegendItem>
              </CutStrip>
            </Legend>
            <LowerChart />
            <InputBar>
              <InputCell $width={22} $color="#a00000">A</InputCell>
              <InputCell $width={73}>极品五笔</InputCell>
              <InputCell $width={21}>
                <svg width={12} height={14} viewBox="0 0 12 14">
                  <path d="M8 1a6 6 0 1 1-7 9 6 6 0 0 0 7-9z" fill="#111" />
                </svg>
              </InputCell>
              <InputCell $width={21}>,,</InputCell>
              <InputCell $width={17}>
                <svg width={13} height={12} viewBox="0 0 13 12">
                  <path d="M1 1h11M1 4h11M1 7h11M1 10h11" stroke="#555" strokeDasharray="1.5 1" strokeWidth={1.6} />
                </svg>
              </InputCell>
            </InputBar>
          </LowerPane>

          <TimeRow>
            <TimeCell $width={324}>2021年</TimeCell>
            <TimeCell $width={320} $mark>12</TimeCell>
            <TimeCell $width={49} $mark>1</TimeCell>
            <DateCell>2022/01/07/五</DateCell>
            <TimeCell $width={100} />
            <TimeCell $width={223} $mark>2</TimeCell>
            <TimeCell $width={320} $mark>3</TimeCell>
            <TimeCell $width={258} $mark>4</TimeCell>
            <PeriodBox>日线</PeriodBox>
          </TimeRow>
          <TabRow $height={25}>
            {TABS_ONE.map(([t, w, c]) => (
              <Tab key={t} $width={w} $color={c}>{t}</Tab>
            ))}
            <TabFill />
            <Tab $width={46}>增板</Tab>
            <Tab $width={38}>一</Tab>
            <Tab $width={38} />
          </TabRow>
          <TabRow $height={29} $bottom>
            {TABS_TWO.map(([t, w, c]) => (
              <Tab key={t} $width={w} $color={c}>{t}</Tab>
            ))}
          </TabRow>
        </LeftColumn>

        <QuotePanel>
          <QuoteHead>
            <NameRow>
              <StockName>南京医药</StockName>
              <StockCode>600713</StockCode>
            </NameRow>
            <PriceRow>
              <span>4.44</span>
              <span>▲0.04</span>
              <span>0.91%</span>
            </PriceRow>
          </QuoteHead>

          {ASKS.map(([name, price, vol], i) => (
            <BookRow key={name}>
              <Label>{name}{i === 0 && " ¥"}</Label>
              <Num $color={RED}>{price}</Num>
              <Num $color={GOLD}>{vol}<Wan /></Num>
            </BookRow>
          ))}
          <BookDivider />
          {BIDS.map(([name, price, vol, color]) => (
            <BookRow key={name}>
              <Label>{name}</Label>
              <Num $color={color}>{price}</Num>
              <Num $color={GOLD}>{vol}<Wan /></Num>
            </BookRow>
          ))}
          <RedDivider $above={3} />

          {STATS.map(([a, av, ac, b, bv, bc]) => (
            <StatRow key={a} $height={28.5}>
              <Label>{a}</Label>
              <Num $color={ac}>{av}</Num>
              <Label $indent={8}>{b}</Label>
              <Num $color={bc}>
                {bv.endsWith("亿") ? <>{bv.slice(0, -1)}<Unit>亿</Unit></> : bv}
              </Num>
            </StatRow>
          ))}
          <RedDivider $above={1.5} />

          <StatRow $height={28.3}>
            <Label>换手</Label>
            <Num $color={GRAY}>1.81%</Num>
            <Label $indent={8}>股本</Label>
            <Num $color={GRAY}>13.1<Unit>亿</Unit></Num>
          </StatRow>
          <StatRow $height={28.3}>
            <Label>净资</Label>
            <Num $color={GRAY}>4.42</Num>
            <Label $indent={8}>流通</Label>
            <Num $color={GRAY}>10.4<Unit>亿</Unit></Num>
          </StatRow>
          <StatRow $height={28.3}>
            <Label>收益<SmallBracket>(四)</SmallBracket></Label>
            <Num $color={GRAY}>0.490</Num>
            <BoldTag>PE(动)</BoldTag>
            <Num $color={GRAY}>11.5</Num>
          </StatRow>
          <RedDivider $above={5} />

          {FLOWS.map((f) => (
            <FlowRow key={f.name}>
              <Label>{f.name}</Label>
              <FlowBar $width={f.w} $height={f.h} $color={f.color} />
              <Num $color={f.color}>{f.value}<Wan /></Num>
              <Num $color={f.color}>{f.pct}</Num>
            </FlowRow>
          ))}
          <RedDivider $above={6} />

          {TRADES.map(([time, price, vol, side, count], i) => (
            <TradeRow key={i}>
              <Num $color={GRAY}>{time}</Num>
              <Num $color={RED}>{price}</Num>
              <Num $color={side ? GOLD : "#c000c8"}>{vol}<Wan /></Num>
              <Side $color={side === "S" ? GREEN : RED}>{side}</Side>
              <Num $color="#a8a8a8">{count}</Num>
            </TradeRow>
          ))}
        </QuotePanel>

        <Sidebar>
          {SIDE_TOP.map((icon, i) => (
            <SideItem key={i}>{icon}</SideItem>
          ))}
          <SideRule />
          {SIDE_TOOLS.map((icon, i) => (
            <SideItem key={i}>{icon}</SideItem>
          ))}
          <SideRule />
          {SIDE_AFTER.map((icon, i) => (
            <SideItem key={i}>{icon}</SideItem>
          ))}
          {SIDE_TEXT.map((t) => (
            <SideItem key={t} $selected={t === "日"}>{t}</SideItem>
          ))}
        </Sidebar>
      </Body>

      <StatusBar>
        <StatusIcon />
        <StatusName $width={54}>上证</StatusName>
        <StatusValue $width={94}>2886.43</StatusValue>
        <StatusValue $width={81}>-42.08</StatusValue>
        <StatusValue $width={88}>-1.44%</StatusValue>
        <StatusValue $width={94} $dark>3960<StatusUnit>亿</StatusUnit></StatusValue>
        <StatusName $width={53}>深证</StatusName>
        <StatusValue $width={91}>10206.6</StatusValue>
        <StatusValue $width={85}>-172.64</StatusValue>
        <StatusValue $width={87}>-1.66%</StatusValue>
        <StatusValue $width={98} $dark>4428<StatusUnit>亿</StatusUnit></StatusValue>
        <StatusName $width={53}>中小</StatusName>
        <StatusValue $width={90}>6925.16</StatusValue>
        <StatusValue $width={84}>-106.85</StatusValue>
        <StatusValue $width={89}>-1.52%</StatusValue>
        <StatusValue $width={96} $dark>579.1<StatusUnit>亿</StatusUnit></StatusValue>
        <StatusSplit />
        <StatusName $width={82}>总成交</StatusName>
        <StatusValue $width={100} $dark>8300<StatusUnit>亿</StatusUnit></StatusValue>
      </StatusBar>

      <Banner>
        <BannerTitle>公式指标网</BannerTitle>
        <BannerLogo />
        <BannerUrl>www.9m8.cn</BannerUrl>
      </Banner>
    </Window>
  );
}
